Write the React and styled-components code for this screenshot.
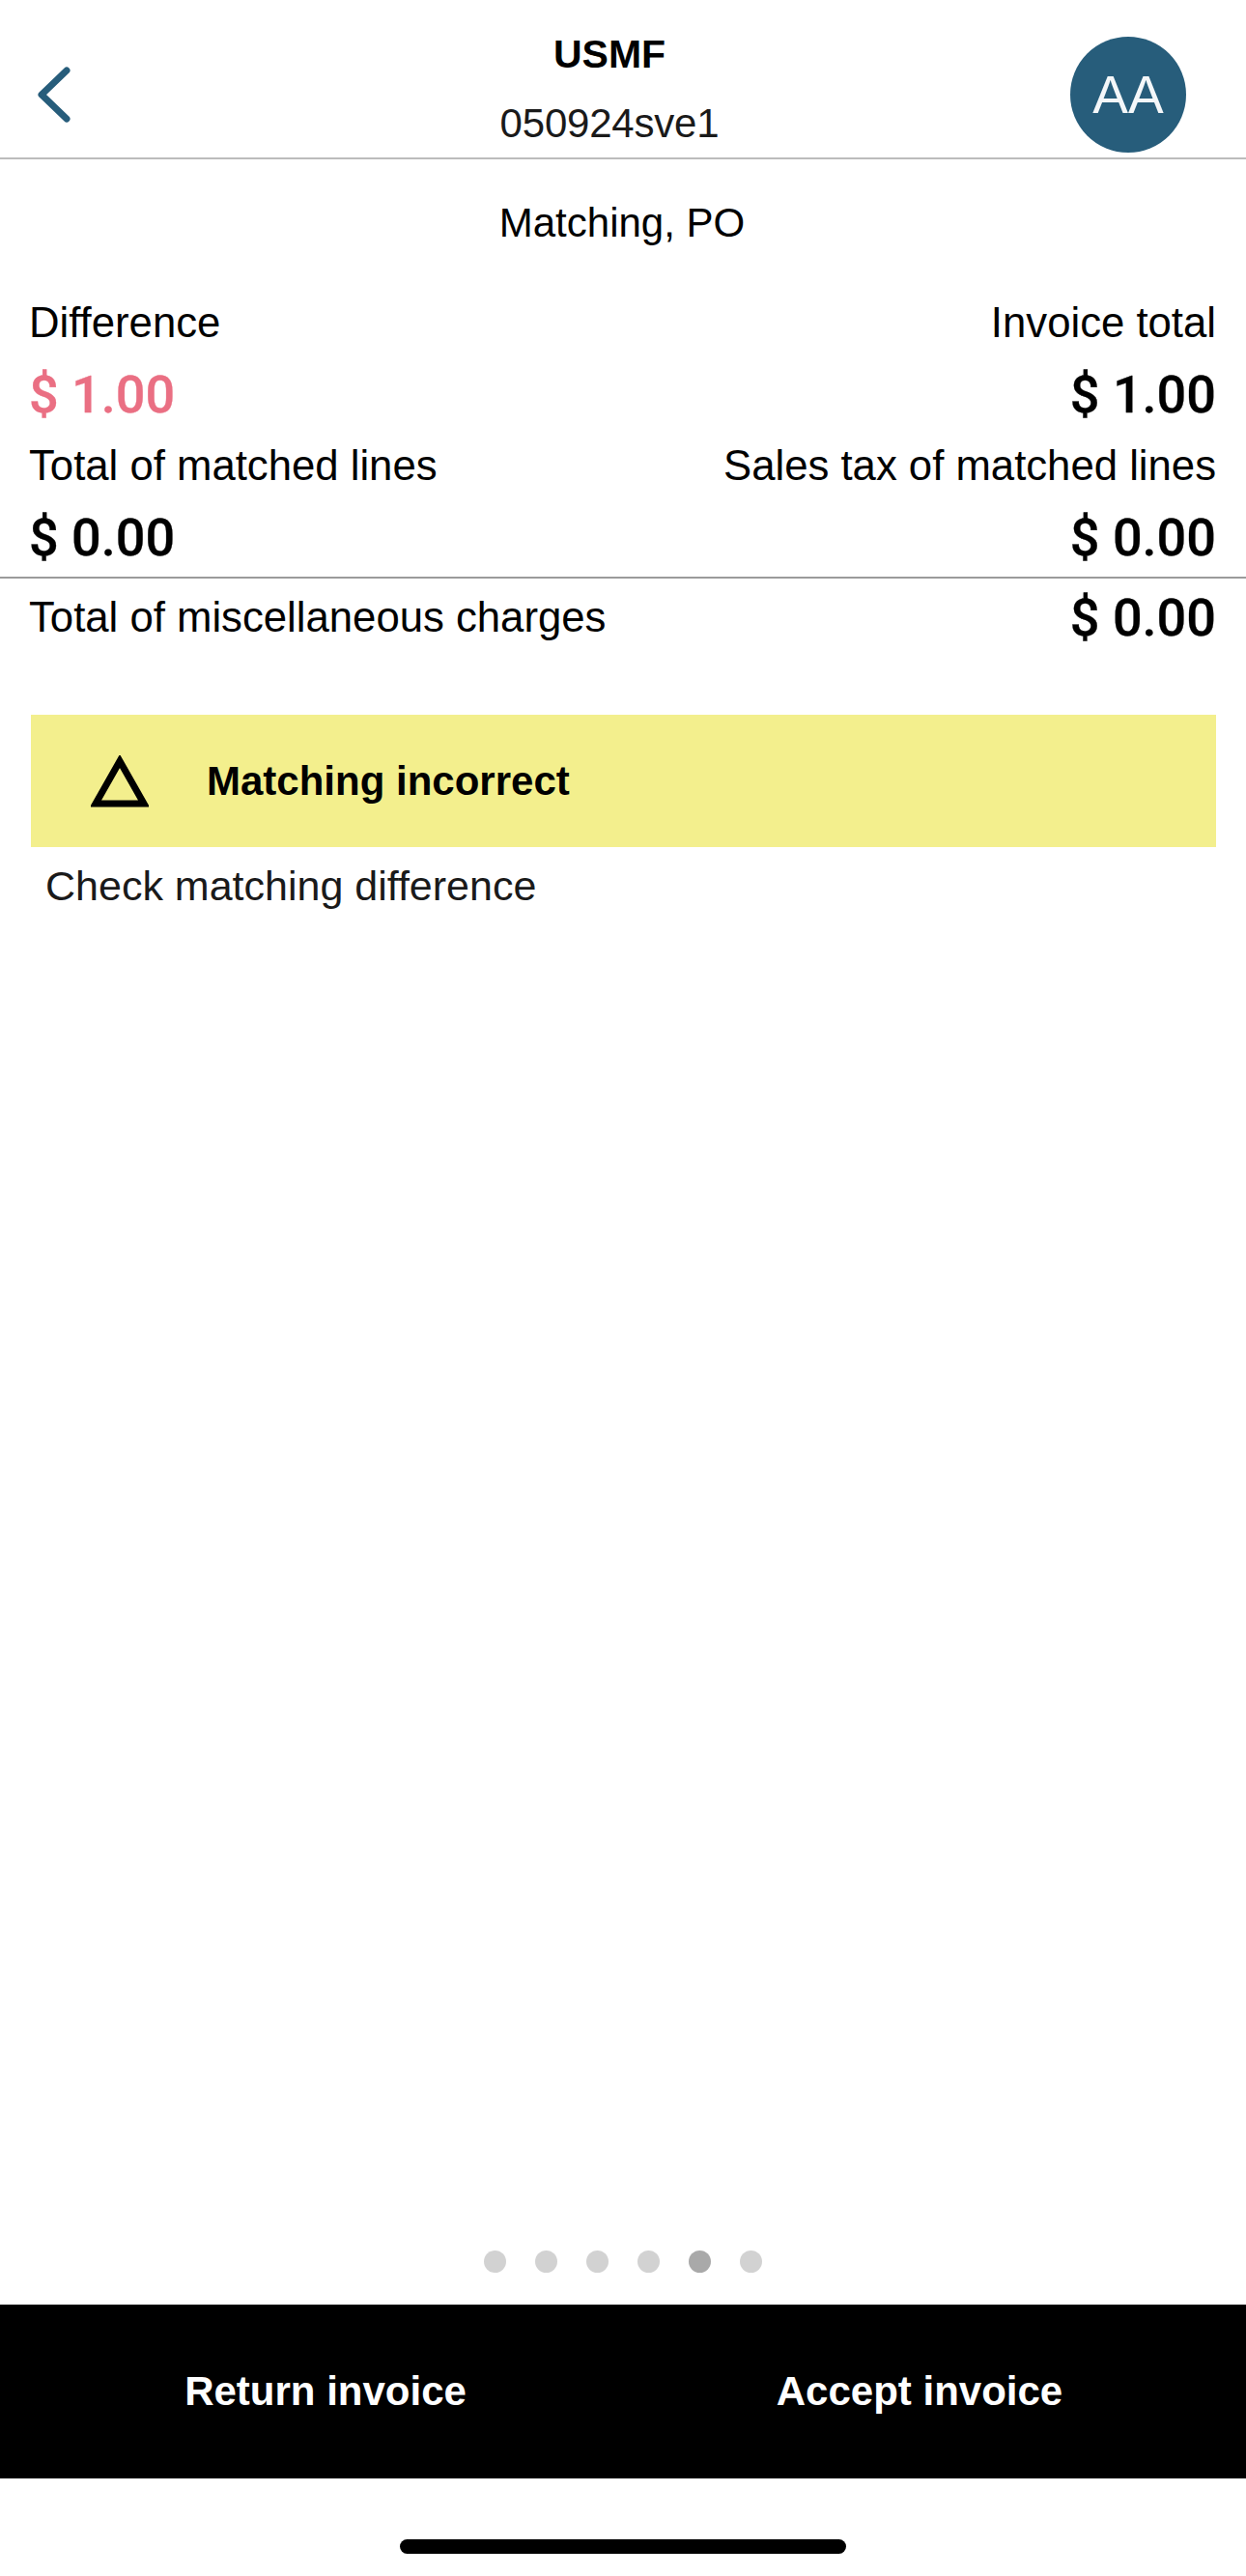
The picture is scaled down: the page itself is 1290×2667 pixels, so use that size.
import React from 'react'
import styled, { createGlobalStyle } from 'styled-components'

const GlobalStyle = createGlobalStyle`
  html, body { margin: 0; padding: 0; background: #fff; }
  body { font-family: "Liberation Sans", Arial, sans-serif; color: #000; }
  * { box-sizing: border-box; }
`

const Page = styled.div`
  width: 1290px;
  height: 2667px;
  display: flex;
  flex-direction: column;
`

const Header = styled.header`
  height: 165px;
  display: flex;
  align-items: center;
  border-bottom: 2px solid #bcbcbc;
`

const BackSlot = styled.div`
  width: 154px;
  padding: 32px 0 0 36px;
  display: flex;
`

const TitleBlock = styled.div`
  flex: 1;
  display: flex;
  flex-direction: column;
  align-items: center;
  gap: 30px;
  margin-top: 21px;
`

const Company = styled.div`
  font-size: 41px;
  line-height: 42px;
  font-weight: 700;
`

const InvoiceId = styled.div`
  font-size: 42px;
  line-height: 42px;
  letter-spacing: -0.2px;
  color: #1a1a1a;
`

const AvatarSlot = styled.div`
  width: 182px;
  padding-top: 32px;
`

const Avatar = styled.div`
  width: 120px;
  height: 120px;
  border-radius: 50%;
  background: #275d7b;
  color: #f4f7f9;
  font-size: 55px;
  display: flex;
  align-items: center;
  justify-content: center;
`

const Main = styled.main`
  flex: 1;
  display: flex;
  flex-direction: column;
`

const Subtitle = styled.div`
  height: 132px;
  padding-right: 2px;
  display: flex;
  align-items: center;
  justify-content: center;
  font-size: 42px;
`

const Row = styled.div`
  height: ${p => p.$h || 74}px;
  padding: 0 31px 0 30px;
  display: flex;
  align-items: center;
  justify-content: space-between;
`

const Label = styled.span`
  font-size: 43.7px;
`

const Amount = styled.span`
  font-family: Roboto, "Liberation Sans", sans-serif;
  font-size: 54px;
  font-weight: 500;
  -webkit-text-stroke: 0.3px currentColor;
  color: ${p => p.$negative ? '#ea6f83' : '#000'};
`

const Divider = styled.div`
  height: 2px;
  margin-top: 4px;
  background: #9b9b9b;
`

const Warning = styled.div`
  height: 137px;
  margin: 61px 31px 0 32px;
  padding-left: 62px;
  display: flex;
  align-items: center;
  gap: 60px;
  background: #f3ef8d;
`

const WarningTitle = styled.span`
  font-size: 42px;
  font-weight: 700;
`

const WarningText = styled.div`
  margin: 16px 0 0 47px;
  font-size: 43px;
  line-height: 48px;
  color: #1a1a1a;
`

const Dots = styled.div`
  margin-top: auto;
  padding-bottom: 33px;
  display: flex;
  justify-content: center;
  gap: 30px;
`

const Dot = styled.span`
  width: 23px;
  height: 23px;
  border-radius: 50%;
  background: ${p => p.$active ? '#a9a9a9' : '#d2d2d2'};
`

const ActionBar = styled.div`
  height: 180px;
  padding-right: 60px;
  display: grid;
  grid-template-columns: 674px 1fr;
  background: #000;
`

const ActionButton = styled.button`
  border: none;
  background: none;
  color: #fff;
  font-family: inherit;
  font-size: 42px;
  font-weight: 700;
`

const HomeArea = styled.div`
  height: 101px;
  padding-top: 63px;
  display: flex;
  justify-content: center;
`

const HomeBar = styled.div`
  width: 462px;
  height: 15px;
  border-radius: 8px;
  background: #000;
`

export default function App() {
  return (
    <Page>
      <GlobalStyle />
      <Header>
        <BackSlot>
          <svg width="40" height="62" viewBox="0 0 40 62" fill="none">
            <path d="M33 6 L7 31 L33 56" stroke="#275d7b" strokeWidth="7" strokeLinecap="round" strokeLinejoin="round" />
          </svg>
        </BackSlot>
        <TitleBlock>
          <Company>USMF</Company>
          <InvoiceId>050924sve1</InvoiceId>
        </TitleBlock>
        <AvatarSlot>
          <Avatar>AA</Avatar>
        </AvatarSlot>
      </Header>
      <Main>
        <Subtitle>Matching, PO</Subtitle>
        <Row><Label>Difference</Label><Label>Invoice total</Label></Row>
        <Row><Amount $negative>$ 1.00</Amount><Amount>$ 1.00</Amount></Row>
        <Row><Label>Total of matched lines</Label><Label>Sales tax of matched lines</Label></Row>
        <Row><Amount>$ 0.00</Amount><Amount>$ 0.00</Amount></Row>
        <Divider />
        <Row $h={80}><Label>Total of miscellaneous charges</Label><Amount>$ 0.00</Amount></Row>
        <Warning>
          <svg width="60" height="54" viewBox="0 0 60 54" fill="none">
            <path d="M30 6 L55 50 H5 Z" stroke="#000" strokeWidth="7" />
          </svg>
          <WarningTitle>Matching incorrect</WarningTitle>
        </Warning>
        <WarningText>Check matching difference</WarningText>
        <Dots>
          {[0, 1, 2, 3, 4, 5].map(i => <Dot key={i} $active={i === 4} />)}
        </Dots>
      </Main>
      <ActionBar>
        <ActionButton>Return invoice</ActionButton>
        <ActionButton>Accept invoice</ActionButton>
      </ActionBar>
      <HomeArea><HomeBar /></HomeArea>
    </Page>
  )
}
